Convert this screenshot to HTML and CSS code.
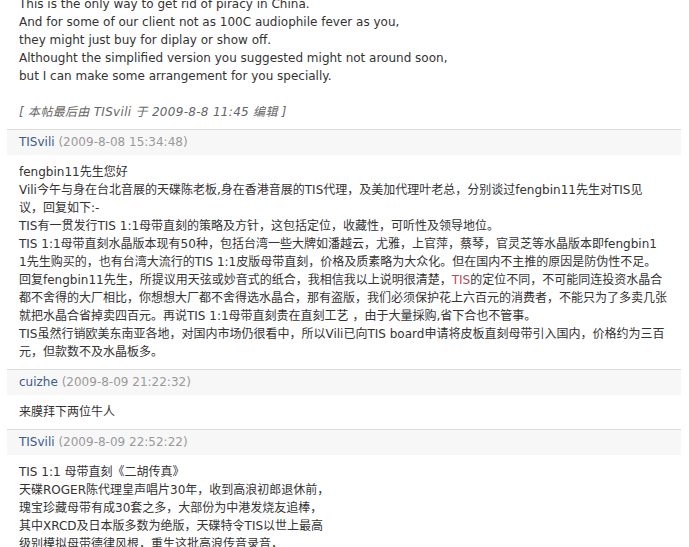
FILE: index.html
```html
<!DOCTYPE html>
<html lang="zh-CN">
<head>
<meta charset="utf-8">
<title>TIS 1:1 母带直刻</title>
<link rel="stylesheet" href="styles.css">
</head>
<body>
<div class="thread">
  <div class="post-body lead">
    This is the only way to get rid of piracy in China.<br>
    And for some of our client not as 100C audiophile fever as you,<br>
    they might just buy for diplay or show off.<br>
    Althought the simplified version you suggested might not around soon,<br>
    but I can make some arrangement for you specially.<br>
    <br>
    <i class="edit">[ 本帖最后由 TISvili 于 2009-8-8 11:45 编辑 ]</i>
  </div>

  <div class="post">
    <div class="post-head"><a class="user" href="#">TISvili</a> <span class="time">(2009-8-08 15:34:48)</span></div>
    <div class="post-body">
      fengbin11先生您好<br>
      Vili今午与身在台北音展的天碟陈老板,身在香港音展的TIS代理，及美加代理叶老总，分别谈过fengbin11先生对TIS见<br>
      议，回复如下:-<br>
      TIS有一贯发行TIS 1:1母带直刻的策略及方针，这包括定位，收藏性，可听性及领导地位。<br>
      TIS 1:1母带直刻水晶版本现有50种，包括台湾一些大牌如潘越云，尤雅，上官萍，蔡琴，官灵芝等水晶版本即fengbin1<br>
      1先生购买的，也有台湾大流行的TIS 1:1皮版母带直刻，价格及质素略为大众化。但在国内不主推的原因是防伪性不足。<br>
      回复fengbin11先生，所提议用天弦或妙音式的纸合，我相信我以上说明很清楚，<span class="hl">TIS</span>的定位不同，不可能同连投资水晶合<br>
      都不舍得的大厂相比，你想想大厂都不舍得选水晶合，那有盗版，我们必须保护花上六百元的消费者，不能只为了多卖几张<br>
      就把水晶合省掉卖四百元。再说TIS 1:1母带直刻贵在直刻工艺 ，由于大量採购,省下合也不管事。<br>
      TIS虽然行销欧美东南亚各地，对国内市场仍很看中，所以Vili已向TIS board申请将皮板直刻母带引入国内，价格约为三百<br>
      元，但款数不及水晶板多。
    </div>
  </div>

  <div class="post">
    <div class="post-head"><a class="user" href="#">cuizhe</a> <span class="time">(2009-8-09 21:22:32)</span></div>
    <div class="post-body">来膜拜下两位牛人</div>
  </div>

  <div class="post">
    <div class="post-head"><a class="user" href="#">TISvili</a> <span class="time">(2009-8-09 22:52:22)</span></div>
    <div class="post-body">
      TIS 1:1 母带直刻《二胡传真》<br>
      天碟ROGER陈代理皇声唱片30年，收到高浪初郎退休前，<br>
      瑰宝珍藏母带有成30套之多，大部份为中港发烧友追棒，<br>
      其中XRCD及日本版多数为绝版，天碟特令TIS以世上最高<br>
      级别模拟母带德律风根，重生这批高浪传音录音，
    </div>
  </div>
</div>
</body>
</html>
```

FILE: styles.css
```css
html, body {
  margin: 0;
  padding: 0;
  background: #ffffff;
  overflow: hidden;
}

body {
  font-family: "DejaVu Sans", "Noto Sans CJK SC", sans-serif;
  font-size: 12px;
  line-height: 18px;
  color: #333333;
}

.thread {
  width: 674px;
  margin-left: 7px;
}

.post-body {
  padding: 8px 12px;
  white-space: nowrap;
}

.post-body.lead {
  margin-top: -13px;
}

.edit {
  color: #666666;
  font-style: italic;
  letter-spacing: 0.3px;
}

.post-head {
  border-top: 1px solid #dddddd;
  background: #f7f7f7;
  height: 25px;
  line-height: 25px;
  padding: 0 12px;
  font-size: 12px;
}

.user {
  color: #3b5a8f;
  text-decoration: none;
}

.time {
  color: #9a9a9a;
}

.hl {
  color: #b5495b;
}
```
